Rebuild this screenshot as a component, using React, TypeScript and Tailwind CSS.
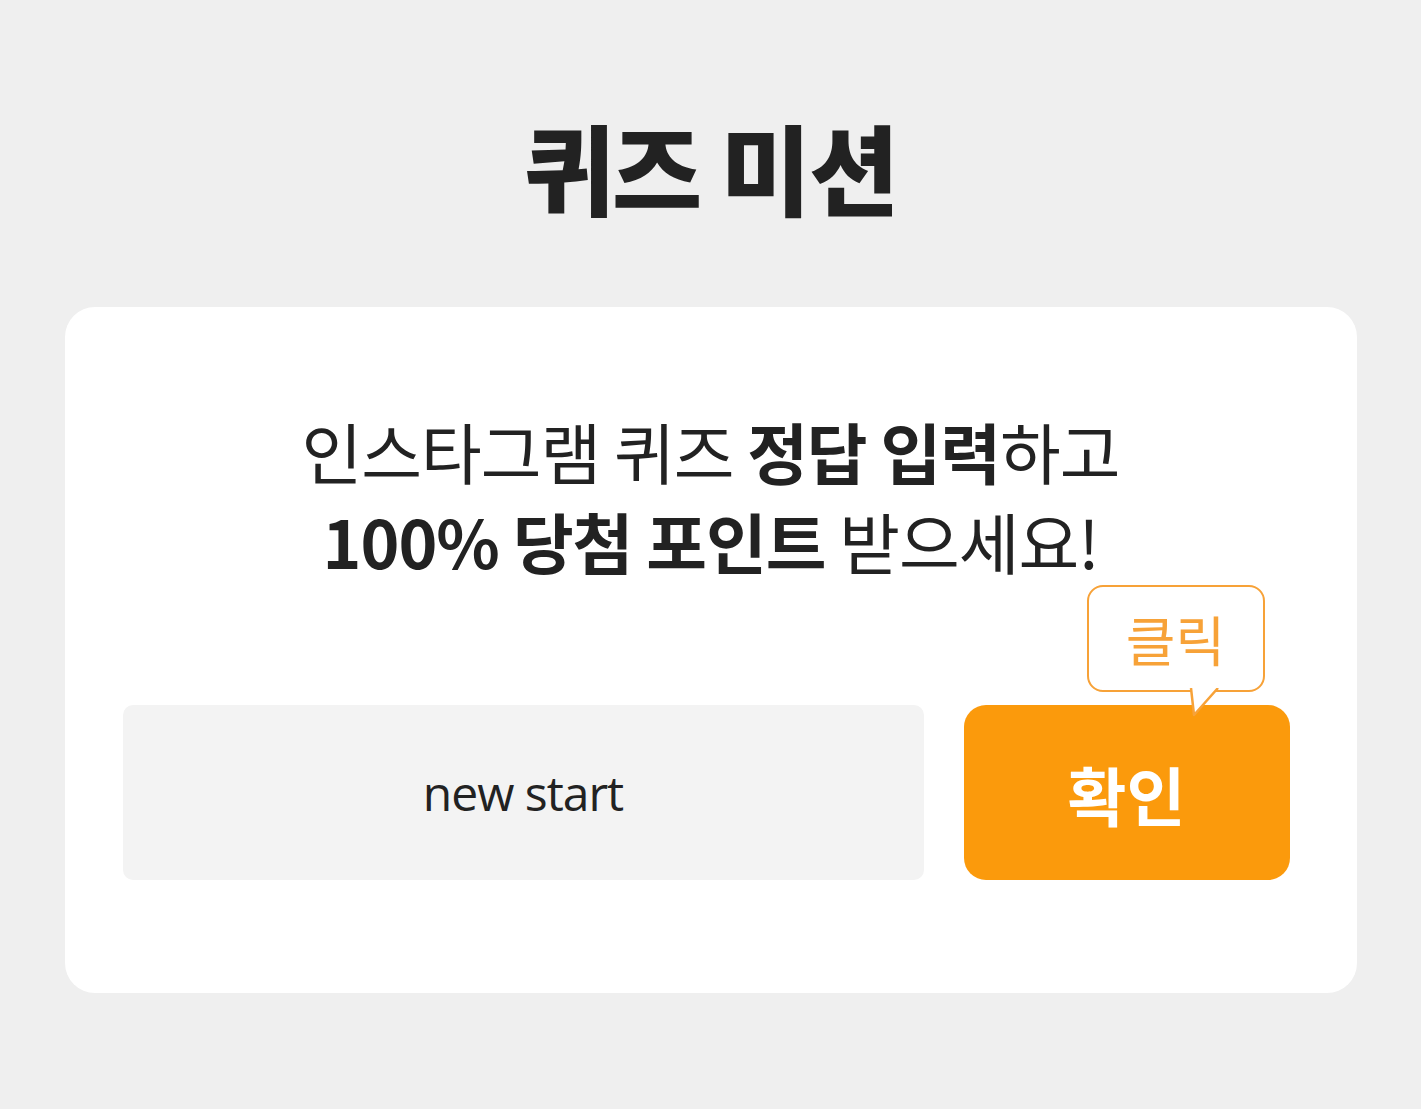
export default function App() {
  return (
    <div
      className="min-h-[1109px] w-full bg-[#efefef] flex flex-col items-center"
      style={{ fontFamily: '"Noto Sans CJK KR", "Noto Sans", sans-serif' }}
    >
      {/* 타이틀 */}
      <h1 className="mt-[116px] text-[98px] leading-none font-black text-[#222] tracking-[-2px]">
        퀴즈 미션
      </h1>

      {/* 카드 */}
      <div className="mt-[93px] w-[1292px] h-[686px] bg-white rounded-[30px] flex flex-col items-center">
        <p className="mt-[98px] text-[66px] leading-[90px] text-[#222] text-center tracking-[-1px]">
          인스타그램 퀴즈 <span className="font-bold">정답 입력</span>하고
          <br />
          <span className="font-bold">100% 당첨 포인트</span> 받으세요!
        </p>

        <div className="mt-[120px] w-full flex pl-[58px] pr-[67px] gap-[40px]">
          <div className="flex-1 h-[175px] bg-[#f3f3f3] rounded-[10px] flex items-center justify-center">
            <span
              className="text-[48px] text-[#222] tracking-[-1px]"
              style={{ fontFamily: '"Open Sans", "Noto Sans", sans-serif' }}
            >
              new start
            </span>
          </div>

          <div className="relative w-[326px] h-[175px]">
            <button className="w-full h-full bg-[#fb9a0c] rounded-[22px] flex items-center justify-center text-white text-[64px] font-bold">
              확인
            </button>

            {/* 말풍선 */}
            <div className="absolute left-[123px] top-[-120px] w-[178px] h-[107px] bg-white border-[2.5px] border-[#f7a238] rounded-[16px] flex items-center justify-center">
              <span className="text-[54px] text-[#f7a238] leading-none">클릭</span>
            </div>
            <svg
              className="absolute left-[217px] top-[-17px]"
              width="44"
              height="30"
              viewBox="0 0 44 30"
            >
              <polygon points="10,0 13,27 37,0" fill="#ffffff" />
              <polyline
                points="10,0 13,27 37,0"
                fill="none"
                stroke="#f7a238"
                strokeWidth="2.5"
                strokeLinejoin="round"
              />
            </svg>
          </div>
        </div>
      </div>
    </div>
  );
}
